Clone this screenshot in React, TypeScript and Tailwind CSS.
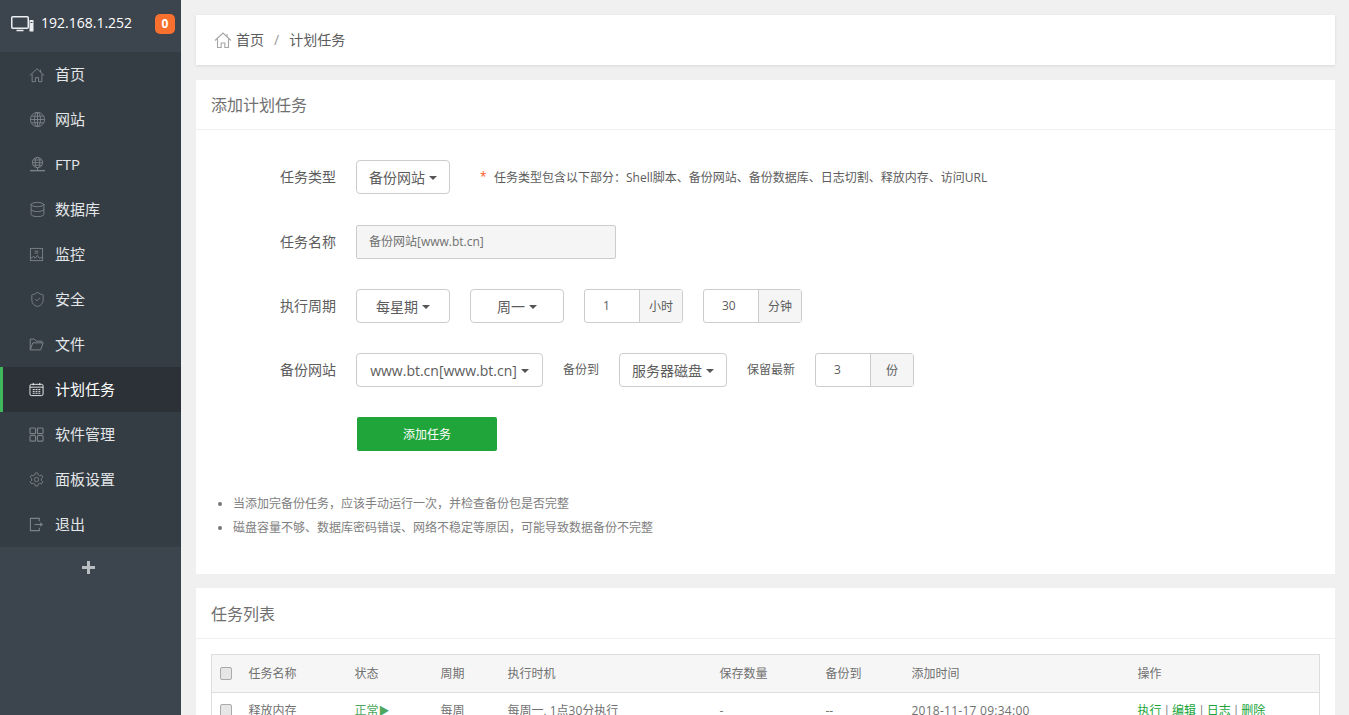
import { ReactNode } from 'react'
import { Database, ShieldCheck } from 'lucide-react'

const font = 'font-["Open_Sans","Noto_Sans_CJK_SC",sans-serif]'

function HomeIcon({ className }: { className: string }) {
  return (
    <svg viewBox="0 0 18 18" className={className} fill="none" stroke="currentColor" strokeWidth="1.1">
      <path d="M1 9.5 9 2l8 7.5" />
      <path d="M3.5 8v8.5h3.7v-4.5h3.6v4.5h3.7V8" />
      <path d="M13 3v3" />
    </svg>
  )
}

function GlobeIcon() {
  return (
    <svg viewBox="0 0 18 18" className="h-[17px] w-[17px]" fill="none" stroke="currentColor" strokeWidth="1">
      <circle cx="9" cy="9" r="7.5" />
      <ellipse cx="9" cy="9" rx="3.2" ry="7.5" />
      <path d="M1.5 9h15M2.6 5.5h12.8M2.6 12.5h12.8M9 1.5v15" />
    </svg>
  )
}

function FtpIcon() {
  return (
    <svg viewBox="0 0 18 18" className="h-[17px] w-[17px]" fill="none" stroke="currentColor" strokeWidth="1">
      <circle cx="9" cy="7" r="5.5" />
      <ellipse cx="9" cy="7" rx="2.4" ry="5.5" />
      <path d="M3.5 7h11M4.3 4.3h9.4M4.3 9.7h9.4M9 12.5v2.5" />
      <path d="M1 15.5h16" strokeWidth="1.5" />
    </svg>
  )
}

function MonitorIcon() {
  return (
    <svg viewBox="0 0 23 18" className="h-[18px] w-[23px]">
      <rect x="0.75" y="1.75" width="16.5" height="11.5" rx="1" fill="none" stroke="currentColor" strokeWidth="1.5" />
      <path d="M5.5 15.5h7" stroke="currentColor" strokeWidth="1.5" />
      <rect x="18.5" y="5" width="4" height="11.5" rx="0.5" fill="currentColor" />
      <path d="M19.5 7.5h2" stroke="#3c444d" strokeWidth="1" />
    </svg>
  )
}

function PulseBoxIcon() {
  return (
    <svg viewBox="0 0 16 16" className="h-[15px] w-[15px]" fill="none" stroke="currentColor" strokeWidth="1">
      <rect x="1.5" y="1.5" width="13" height="13" />
      <path d="M6 4.5h4M6 6.5h4M2 12l3-2 1.5 2L9 9l2 3 3-1" />
    </svg>
  )
}

function FolderIcon() {
  return (
    <svg viewBox="0 0 18 18" className="h-[15px] w-[15px]" fill="none" stroke="currentColor" strokeWidth="1.2">
      <path d="M1.5 15.5V2.5h5l2 2.5h7v2" />
      <path d="M1.5 15.5h12.5l3-8.5H4.5z" />
    </svg>
  )
}

function CalendarIcon() {
  return (
    <svg viewBox="0 0 16 16" className="h-[15px] w-[15px]" fill="none" stroke="currentColor" strokeWidth="1">
      <rect x="1" y="2.5" width="14" height="12" rx="1.5" />
      <path d="M1 5.5h14M4.5 1v2.5M11.5 1v2.5" />
      <path d="M4 8h2M7 8h2M10 8h2M4 10h2M7 10h2M10 10h2M4 12h2M7 12h2M10 12h2" />
    </svg>
  )
}

function GridIcon() {
  return (
    <svg viewBox="0 0 16 16" className="h-[15px] w-[15px]" fill="none" stroke="currentColor" strokeWidth="1.2">
      <rect x="1" y="1" width="6" height="6" rx="1" />
      <rect x="9" y="1" width="6" height="6" rx="1" />
      <rect x="1" y="9" width="6" height="6" rx="1" />
      <rect x="9" y="9" width="6" height="6" rx="1" />
    </svg>
  )
}

function GearIcon() {
  return (
    <svg viewBox="0 0 18 18" className="h-[15px] w-[15px]" fill="none" stroke="currentColor" strokeWidth="1.1">
      <path d="M7.5 1.2h3l.5 2.3 1.8 1 2.2-.8 1.5 2.6-1.7 1.6v2.2l1.7 1.6-1.5 2.6-2.2-.8-1.8 1-.5 2.3h-3l-.5-2.3-1.8-1-2.2.8-1.5-2.6 1.7-1.6V7.9L1.5 6.3 3 3.7l2.2.8 1.8-1z" />
      <circle cx="9" cy="9" r="2.6" />
    </svg>
  )
}

function ExitIcon() {
  return (
    <svg viewBox="0 0 16 16" className="h-[15px] w-[15px]" fill="none" stroke="currentColor" strokeWidth="1.2">
      <path d="M11 4.5V1.5H1.5v13H11v-3" />
      <path d="M6 8h7" />
      <path d="M12 5.5 15 8l-3 2.5z" fill="currentColor" stroke="none" />
    </svg>
  )
}

const menu: { label: string; icon: ReactNode; active?: boolean }[] = [
  { label: '首页', icon: <HomeIcon className="h-[16px] w-[16px]" /> },
  { label: '网站', icon: <GlobeIcon /> },
  { label: 'FTP', icon: <FtpIcon /> },
  { label: '数据库', icon: <Database className="h-[17px] w-[17px]" strokeWidth={1.3} /> },
  { label: '监控', icon: <PulseBoxIcon /> },
  { label: '安全', icon: <ShieldCheck className="h-[17px] w-[17px]" strokeWidth={1.3} /> },
  { label: '文件', icon: <FolderIcon /> },
  { label: '计划任务', icon: <CalendarIcon />, active: true },
  { label: '软件管理', icon: <GridIcon /> },
  { label: '面板设置', icon: <GearIcon /> },
  { label: '退出', icon: <ExitIcon /> },
]

function Sidebar() {
  return (
    <aside className="w-[181px] shrink-0 bg-[#3c444d]">
      <div className="flex h-[52px] items-center pl-[11px] pr-[6px] pb-[4px] text-[14px] text-white">
        <span className="flex w-[23px] text-[#eceff1]">
          <MonitorIcon />
        </span>
        <span className="mb-[3px] ml-[7px] flex-1">192.168.1.252</span>
        <span className="flex h-[20px] w-[20px] items-center justify-center rounded-[5px] bg-[#f7702e] text-[12px] font-bold">0</span>
      </div>
      <nav className="bg-[#353d44]">
        {menu.map((item) => (
          <div
            key={item.label}
            className={
              item.active
                ? 'flex h-[45px] items-center border-l-[3px] border-[#3fb85c] bg-[#2c3138] pl-[26px] text-[15px] text-white'
                : 'flex h-[45px] items-center border-l-[3px] border-transparent pl-[26px] text-[15px] text-[#e3e6e8]'
            }
          >
            <span className={item.active ? 'flex w-[26px] text-[#eeeeee]' : 'flex w-[26px] text-[#7b8288]'}>{item.icon}</span>
            {item.label}
          </div>
        ))}
      </nav>
      <div className="flex h-[41px] items-center justify-center pr-[5px] text-[18px] leading-none text-[#b9bec2]">
        <span className="relative block h-[13px] w-[13px] before:absolute before:left-0 before:top-[5px] before:h-[3px] before:w-[13px] before:bg-[#b9bec2] after:absolute after:left-[5px] after:top-0 after:h-[13px] after:w-[3px] after:bg-[#b9bec2]" />
      </div>
    </aside>
  )
}

function Select({ label, className }: { label: string; className: string }) {
  return (
    <div className={`flex h-[34px] items-center justify-center rounded-[4px] border border-[#cccccc] bg-white text-[14px] text-[#5c5c5c] ${className}`}>
      {label}
      <span className="ml-[4px] mt-[1px] border-x-[4px] border-t-[4px] border-x-transparent border-t-[#555555]" />
    </div>
  )
}

function UnitInput({ value, unit, unitW }: { value: string; unit: string; unitW: string }) {
  return (
    <div className="flex h-[34px] rounded-[3px] border border-[#cccccc] text-[12px] text-[#5c5c5c]">
      <div className="flex w-[54px] items-center pl-[18px]">{value}</div>
      <div className={`flex items-center justify-center border-l border-[#cccccc] bg-[#f5f5f5] pt-[1px] ${unitW}`}>{unit}</div>
    </div>
  )
}

function FormRow({ label, first, children }: { label: string; first?: boolean; children: ReactNode }) {
  return (
    <div className={first ? 'mb-[31px] flex h-[34px] items-center' : 'mb-[30px] flex h-[34px] items-center'}>
      <label className="w-[76px] shrink-0 pb-[2px] text-[14px] text-[#5c5c5c]">{label}</label>
      {children}
    </div>
  )
}

function CardHeader({ title, height }: { title: string; height: string }) {
  return (
    <div className={`flex items-center border-b border-[#f0f0f0] pl-[15px] text-[16px] text-[#707070] ${height}`}>{title}</div>
  )
}

const columns = ['任务名称', '状态', '周期', '执行时机', '保存数量', '备份到', '添加时间', '操作']

function Check() {
  return <span className="block h-[13px] w-[12px] rounded-[2px] border border-[#aaaaaa] bg-[#e6e6e6]" />
}

export default function App() {
  return (
    <div className={`flex h-[715px] overflow-hidden bg-[#f0f0f0] ${font}`}>
      <Sidebar />
      <main className="ml-[15px] mr-[14px] flex-1 pt-[15px]">
        <div className="flex h-[50px] items-center bg-white pl-[18px] text-[14px] text-[#5c5c5c] shadow-[0_1px_3px_rgba(0,0,0,0.1)]">
          <HomeIcon className="h-[18px] w-[18px] text-[#a6a6a6]" />
          <span className="mb-[2px] ml-[4px]">首页</span>
          <span className="mx-[10px] mb-[2px] text-[#999999]">/</span>
          <span className="mb-[2px]">计划任务</span>
        </div>

        <section className="mt-[15px] h-[494px] bg-white">
          <CardHeader title="添加计划任务" height="h-[50px]" />
          <div className="pl-[84px] pt-[30px]">
            <FormRow label="任务类型" first>
              <Select label="备份网站" className="w-[94px]" />
              <span className="ml-[30px] w-[14px] text-[12px] text-[#ff5722]">*</span>
              <span className="pt-[2px] text-[12px] text-[#5c5c5c]">任务类型包含以下部分：Shell脚本、备份网站、备份数据库、日志切割、释放内存、访问URL</span>
            </FormRow>
            <FormRow label="任务名称">
              <div className="flex h-[34px] w-[260px] items-center rounded-[2px] border border-[#cccccc] bg-[#f5f5f5] pl-[12px] text-[12px] text-[#707070]">
                备份网站[www.bt.cn]
              </div>
            </FormRow>
            <FormRow label="执行周期">
              <Select label="每星期" className="w-[94px]" />
              <Select label="周一" className="ml-[20px] w-[94px]" />
              <div className="ml-[20px]"><UnitInput value="1" unit="小时" unitW="w-[43px]" /></div>
              <div className="ml-[20px]"><UnitInput value="30" unit="分钟" unitW="w-[43px]" /></div>
            </FormRow>
            <FormRow label="备份网站">
              <Select label="www.bt.cn[www.bt.cn]" className="w-[187px]" />
              <span className="ml-[20px] w-[56px] text-[12px] text-[#5c5c5c]">备份到</span>
              <Select label="服务器磁盘" className="w-[108px]" />
              <span className="ml-[20px] w-[68px] text-[12px] text-[#5c5c5c]">保留最新</span>
              <UnitInput value="3" unit="份" unitW="w-[43px]" />
            </FormRow>
            <button className="ml-[77px] flex h-[34px] w-[140px] items-center justify-center rounded-[2px] bg-[#20a53a] pt-[1px] text-[12px] text-white">
              添加任务
            </button>
          </div>
          <ul className="mt-[41px] pl-[37px] text-[12px] leading-[24px] text-[#808080]">
            <li className="relative before:absolute before:left-[-15px] before:top-[10px] before:h-[4px] before:w-[4px] before:rounded-full before:bg-[#777777]">
              当添加完备份任务，应该手动运行一次，并检查备份包是否完整
            </li>
            <li className="relative before:absolute before:left-[-15px] before:top-[10px] before:h-[4px] before:w-[4px] before:rounded-full before:bg-[#777777]">
              磁盘容量不够、数据库密码错误、网络不稳定等原因，可能导致数据备份不完整
            </li>
          </ul>
        </section>

        <section className="mt-[14px] bg-white">
          <CardHeader title="任务列表" height="h-[51px] pt-[1px]" />
          <div className="px-[15px] pt-[15px]">
            <table className="w-full table-fixed border border-[#dddddd] text-left text-[12px] text-[#707070]">
              <colgroup>
                <col className="w-[27px]" />
                <col className="w-[106px]" />
                <col className="w-[86px]" />
                <col className="w-[67px]" />
                <col className="w-[212px]" />
                <col className="w-[106px]" />
                <col className="w-[86px]" />
                <col className="w-[226px]" />
                <col />
              </colgroup>
              <thead className="bg-[#f6f6f6]">
                <tr className="h-[38px] border-b border-[#dddddd]">
                  <th className="pl-[8px]"><Check /></th>
                  {columns.map((c) => (
                    <th key={c} className="pl-[10px] font-normal">{c}</th>
                  ))}
                </tr>
              </thead>
              <tbody>
                <tr className="h-[36px]">
                  <td className="pl-[8px]"><Check /></td>
                  <td className="pl-[10px]">释放内存</td>
                  <td className="pl-[10px] text-[#4da75f]">正常<span className="text-[11px]">▶</span></td>
                  <td className="pl-[10px]">每周</td>
                  <td className="pl-[10px]">每周一, 1点30分执行</td>
                  <td className="pl-[10px]">-</td>
                  <td className="pl-[10px]">--</td>
                  <td className="pl-[10px] tracking-[0.26px]">2018-11-17 09:34:00</td>
                  <td className="pl-[10px] text-[#20a53a]">
                    执行<span className="mx-[2px] text-[#777777]">|</span>编辑<span className="mx-[2px] text-[#777777]">|</span>日志<span className="mx-[2px] text-[#777777]">|</span>删除
                  </td>
                </tr>
              </tbody>
            </table>
          </div>
        </section>
      </main>
    </div>
  )
}
